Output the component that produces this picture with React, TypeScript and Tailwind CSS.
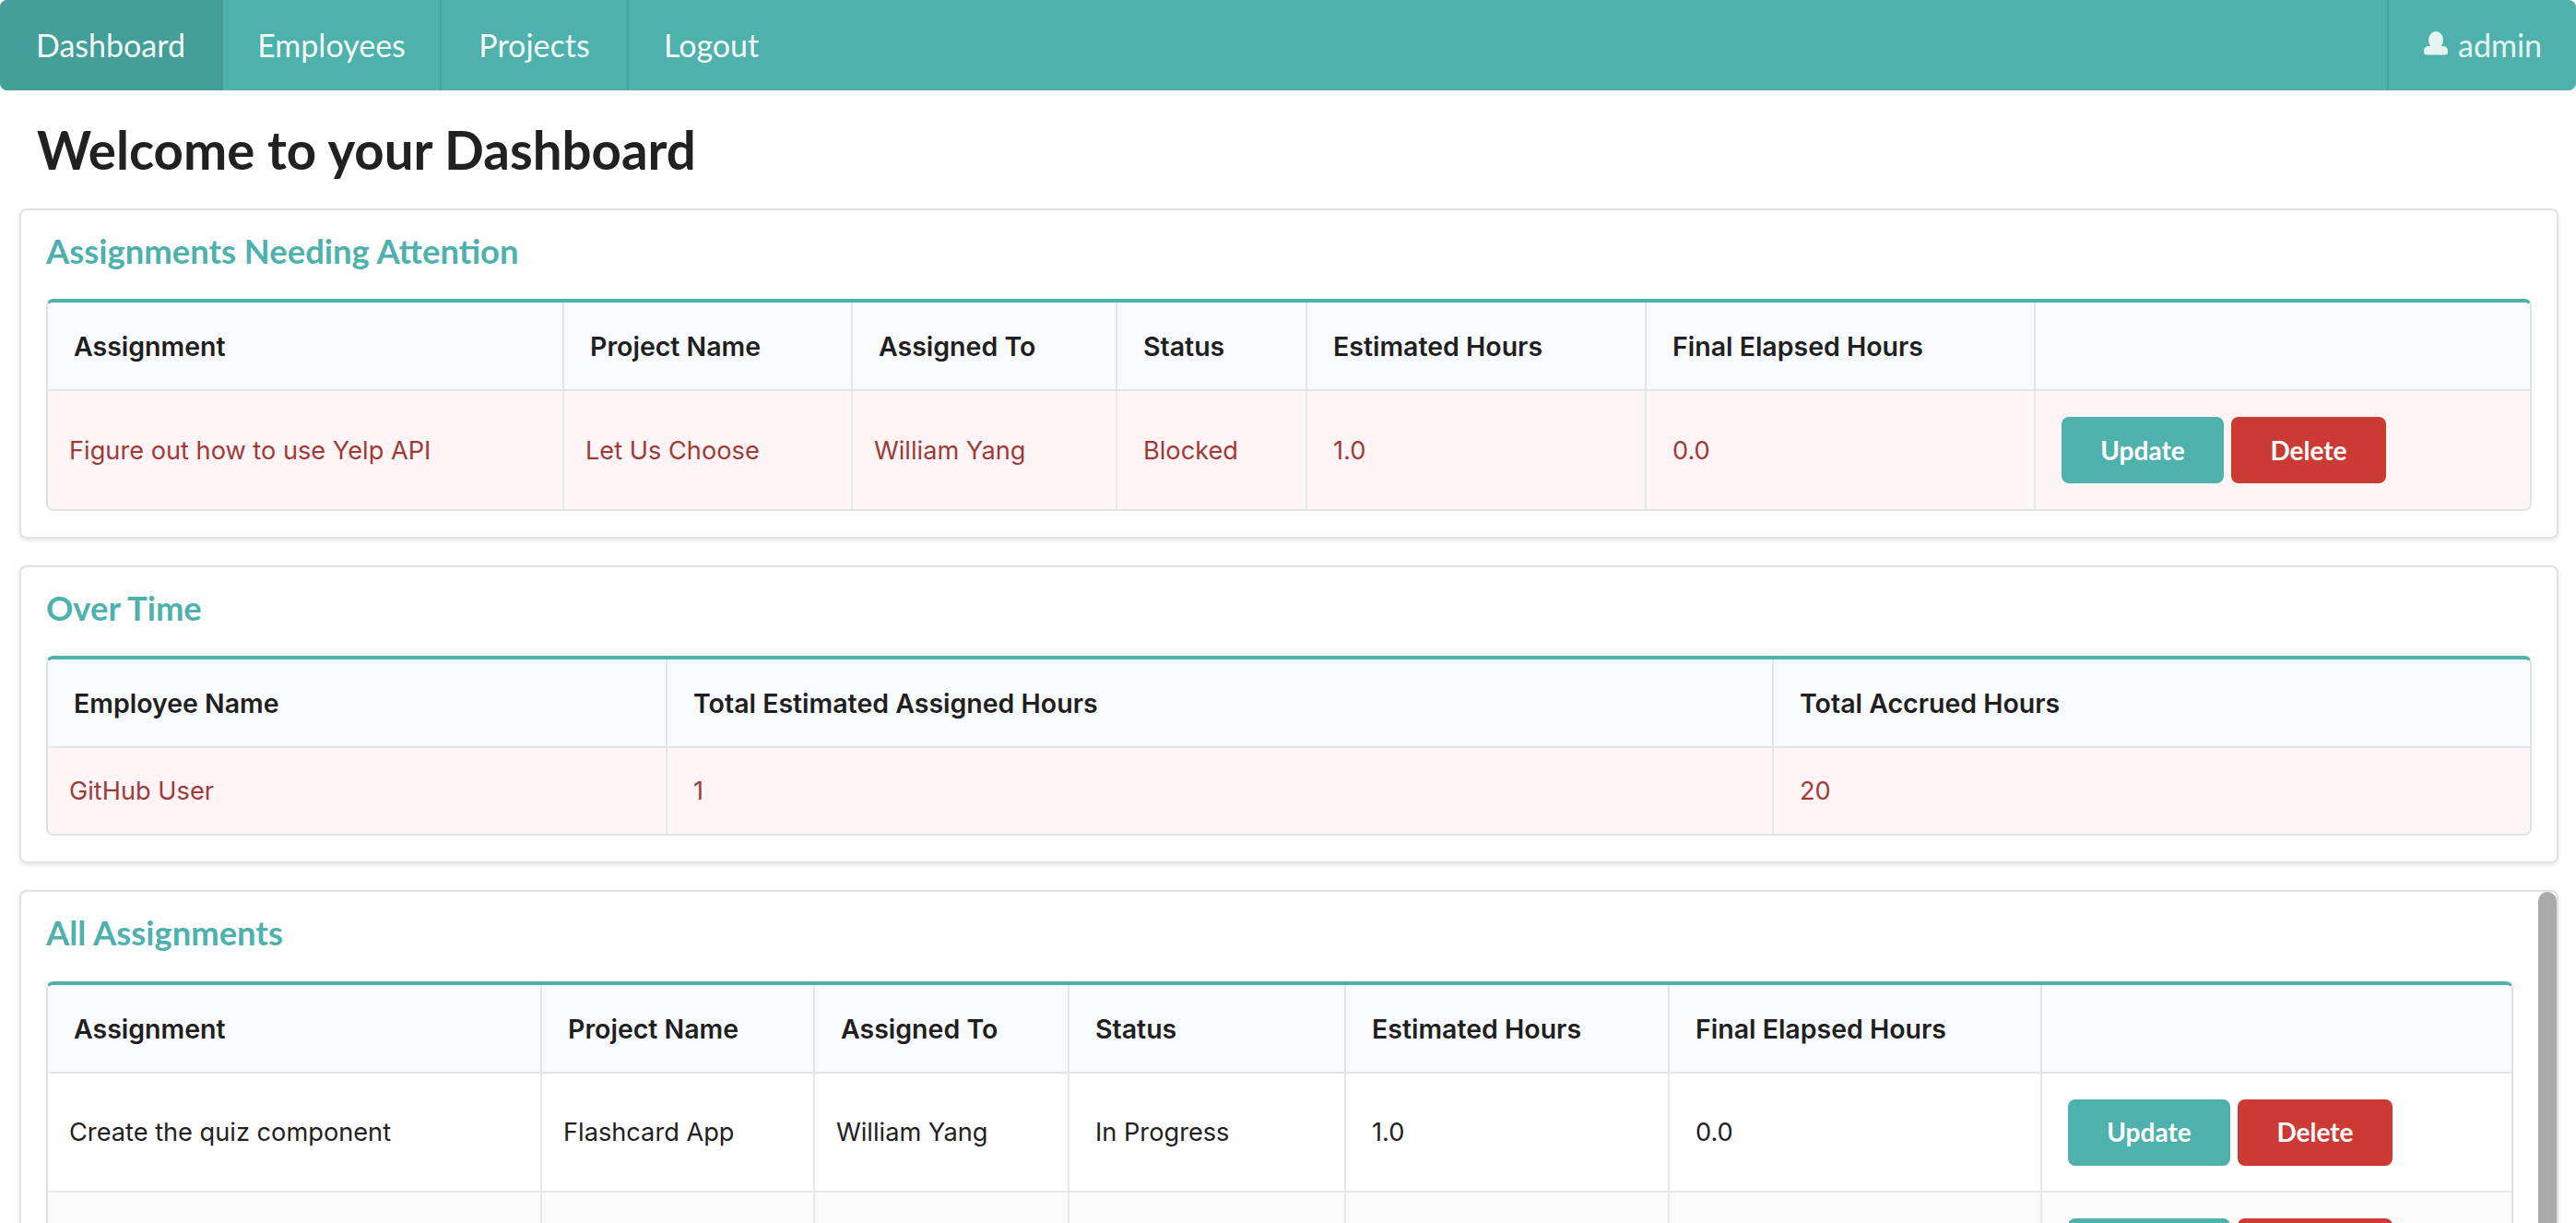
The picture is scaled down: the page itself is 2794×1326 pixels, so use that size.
import React from "react";

const lato = "font-['Lato',sans-serif]";

type Col = { label: string; width: string };

function NavItem({ label, active, width }: { label: string; active?: boolean; width: string }) {
  return (
    <a
      className={`flex h-full items-center justify-center border-r-2 pb-[2px] text-[34px] text-white/95 ${width} ${
        active ? "rounded-l-lg border-[#459a95] bg-[#459f99]" : "border-[#47a29c]"
      }`}
    >
      {label}
    </a>
  );
}

function Buttons() {
  return (
    <div className={`flex gap-2 text-[28px] font-bold text-white ${lato}`}>
      <button className="flex h-[72px] w-[176px] items-center justify-center rounded-lg bg-[#4fb1ab] pb-[1px]">Update</button>
      <button className="flex h-[72px] w-[168px] items-center justify-center rounded-lg bg-[#cb3a33] pb-[1px]">Delete</button>
    </div>
  );
}

function DataTable({
  cols,
  rows,
  negative,
  rowClass,
  tightCols,
}: {
  cols: Col[];
  rows: { cells: string[]; striped?: boolean }[];
  negative?: boolean;
  rowClass: string;
  tightCols: number;
}) {
  return (
    <div className="overflow-hidden rounded-lg border-2 border-t-4 border-[#e0e1e2] border-t-[#4fb1ab]">
      <table className="w-full table-fixed border-collapse font-['Inter',sans-serif]">
        <thead>
          <tr className="h-[95px] bg-[#f9fafb]">
            {cols.map((c) => (
              <th
                key={c.label + c.width}
                className={`border-b-2 border-l-2 border-[#e4e5e6] pt-[2px] pl-[28px] text-left text-[28.5px] font-semibold text-[#1f1f1f] first:border-l-0 ${c.width}`}
              >
                {c.label}
              </th>
            ))}
          </tr>
        </thead>
        <tbody>
          {rows.map((r, i) => (
            <tr
              key={i}
              className={`${rowClass} ${negative ? "bg-[#fff5f6] text-[#9f3a38]" : r.striped ? "bg-[#fafafa] text-[#212121]" : "text-[#212121]"}`}
            >
              {r.cells.map((cell, j) => (
                <td
                  key={j}
                  className={`border-t-2 border-l-2 border-[#e8e9e9] text-[27.2px] first:border-l-0 ${j < tightCols ? "pl-[23px]" : "pl-[28px]"}`}
                >
                  {cell === "#buttons" ? <Buttons /> : <span className="relative top-[1px]">{cell}</span>}
                </td>
              ))}
            </tr>
          ))}
        </tbody>
      </table>
    </div>
  );
}

function Title({ children }: { children: React.ReactNode }) {
  return <h2 className={`h-[70px] text-[36.4px] leading-[36px] font-bold text-[#4fb1ab] ${lato}`}>{children}</h2>;
}

export default function App() {
  return (
    <div className={`h-[1326px] w-full overflow-hidden bg-white ${lato}`}>
      <nav className="flex h-[98px] items-center rounded-lg bg-[#4fb1ab]">
        <NavItem label="Dashboard" active width="w-[242px]" />
        <NavItem label="Employees" width="w-[237px]" />
        <NavItem label="Projects" width="w-[203px]" />
        <a className="pb-[2px] pl-[38px] text-[34px] text-white/95">Logout</a>
        <div className="ml-auto flex h-full w-[205px] items-center gap-[10px] border-l-2 border-[#47a29c] pb-[2px] pl-[37px] text-[34px] text-white/85">
          <svg width="28" height="28" viewBox="0 0 28 28" fill="currentColor" aria-hidden="true">
            <ellipse cx="14" cy="9.5" rx="8" ry="9.5" />
            <path d="M1 21a5 5 0 0 1 5-5h3c1 1.3 3 2.4 5 2.4s4-1.1 5-2.4h3a5 5 0 0 1 5 5v1.5a3 3 0 0 1-3 3H4a3 3 0 0 1-3-3z" />
          </svg>
          <span>admin</span>
        </div>
      </nav>

      <h1 className="h-[128px] pt-[24px] pl-[40px] text-[56.4px] leading-[80px] font-bold text-[#212121]">
        Welcome to your Dashboard
      </h1>

      <div className="flex flex-col gap-[29px] pr-[19px] pl-[21px]">
        <section className="rounded-lg border-2 border-[#e0e1e2] px-[27px] pt-[26px] pb-[28px] shadow-[0_2px_4px_rgba(34,36,38,0.12)]">
          <Title>Assignments Needing Attention</Title>
          <DataTable
            negative
            tightCols={3}
            rowClass="h-[129px]"
            cols={[
              { label: "Assignment", width: "w-[559px]" },
              { label: "Project Name", width: "w-[313px]" },
              { label: "Assigned To", width: "w-[287px]" },
              { label: "Status", width: "w-[206px]" },
              { label: "Estimated Hours", width: "w-[368px]" },
              { label: "Final Elapsed Hours", width: "w-[422px]" },
              { label: "", width: "w-auto" },
            ]}
            rows={[{ cells: ["Figure out how to use Yelp API", "Let Us Choose", "William Yang", "Blocked", "1.0", "0.0", "#buttons"] }]}
          />
        </section>

        <section className="rounded-lg border-2 border-[#e0e1e2] px-[27px] pt-[26px] pb-[28px] shadow-[0_2px_4px_rgba(34,36,38,0.12)]">
          <Title>Over Time</Title>
          <DataTable
            negative
            tightCols={1}
            rowClass="h-[94px]"
            cols={[
              { label: "Employee Name", width: "w-[671px]" },
              { label: "Total Estimated Assigned Hours", width: "w-[1200px]" },
              { label: "Total Accrued Hours", width: "w-auto" },
            ]}
            rows={[{ cells: ["GitHub User", "1", "20"] }]}
          />
        </section>

        <section className="relative rounded-lg border-2 border-[#e0e1e2] pt-[26px] pr-[47px] pb-[28px] pl-[27px] shadow-[0_2px_4px_rgba(34,36,38,0.12)]">
          <div className="absolute top-0 right-0 h-[600px] w-[20px] rounded-t-[10px] bg-[#aaaaaa]" />
          <Title>All Assignments</Title>
          <div className="mt-[1px]">
            <DataTable
              tightCols={3}
              rowClass="h-[129px]"
              cols={[
                { label: "Assignment", width: "w-[535px]" },
                { label: "Project Name", width: "w-[296px]" },
                { label: "Assigned To", width: "w-[276px]" },
                { label: "Status", width: "w-[300px]" },
                { label: "Estimated Hours", width: "w-[351px]" },
                { label: "Final Elapsed Hours", width: "w-[404px]" },
                { label: "", width: "w-auto" },
              ]}
              rows={[
                { cells: ["Create the quiz component", "Flashcard App", "William Yang", "In Progress", "1.0", "0.0", "#buttons"] },
                { cells: ["", "", "", "", "", "", "#buttons"], striped: true },
              ]}
            />
          </div>
        </section>
      </div>
    </div>
  );
}
